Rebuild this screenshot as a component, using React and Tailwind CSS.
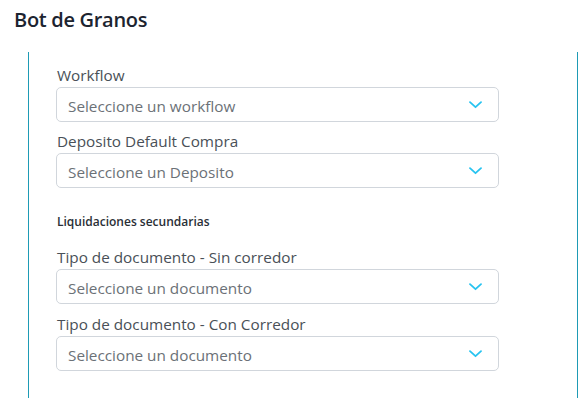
import React from "react";

function Chevron() {
  return (
    <svg width="13" height="8" viewBox="0 0 13 8" fill="none" className="shrink-0">
      <path d="M1 1.2L6.5 6.2L12 1.2" stroke="#27c3f0" strokeWidth="1.8" strokeLinecap="round" strokeLinejoin="round" />
    </svg>
  );
}

function Field({ label, placeholder }) {
  return (
    <div className="flex flex-col">
      <div className="h-[23px] flex items-center pl-[1px] text-[15.3px] text-[#495057] leading-none">{label}</div>
      <div className="w-[443px] h-[35px] border border-[#d1d6dc] rounded-[5px] flex items-center justify-between pl-[11px] pr-[16px]">
        <span className="text-[15.3px] text-[#6b7177] leading-none pt-[5px]">{placeholder}</span>
        <Chevron />
      </div>
    </div>
  );
}

export default function App() {
  return (
    <div className="w-[588px] h-[398px] bg-white overflow-hidden" style={{ fontFamily: "'Open Sans', 'Liberation Sans', sans-serif" }}>
      <div className="pl-[14px] pt-[8px] h-[52px]">
        <h1 className="text-[20px] font-semibold text-[#1c2430] leading-[24px] tracking-[-0.3px]">Bot de Granos</h1>
      </div>
      <div className="ml-[28px] w-[550px] h-[346px] border-l border-r border-[#1e9bb5] pl-[27px] pt-[12px]">
        <div className="flex flex-col gap-[8px]">
          <Field label="Workflow" placeholder="Seleccione un workflow" />
          <Field label="Deposito Default Compra" placeholder="Seleccione un Deposito" />
        </div>
        <div className="h-[22px] mt-[23px] pl-[1px] flex items-center text-[12px] font-semibold text-[#2a2f36]">Liquidaciones secundarias</div>
        <div className="flex flex-col gap-[9px] mt-[13px]">
          <Field label="Tipo de documento - Sin corredor" placeholder="Seleccione un documento" />
          <Field label="Tipo de documento - Con Corredor" placeholder="Seleccione un documento" />
        </div>
      </div>
    </div>
  );
}
